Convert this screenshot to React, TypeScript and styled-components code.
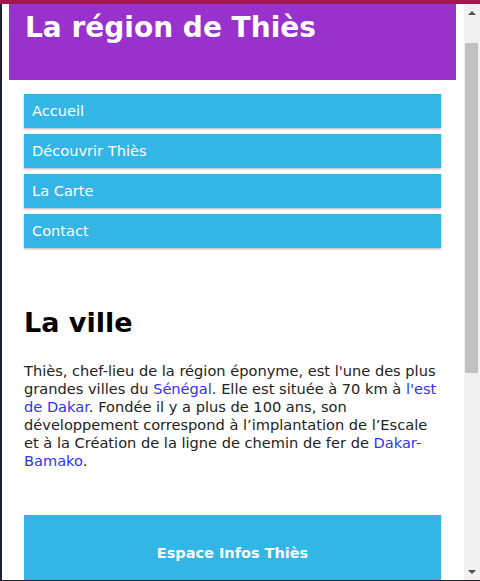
import React from "react";
import styled, { createGlobalStyle } from "styled-components";

const Global = createGlobalStyle`
  html, body { margin: 0; padding: 0; overflow: hidden; background: #fff; }
  body { font-family: "DejaVu Sans", "Liberation Sans", sans-serif; }
`;

const Frame = styled.div`
  width: 480px;
  height: 581px;
  display: flex;
  flex-direction: column;
  overflow: hidden;
`;

const TopBar = styled.div`
  height: 4px;
  flex: 0 0 4px;
  background: #a3164f;
`;

const Middle = styled.div`
  flex: 1;
  display: flex;
  min-height: 0;
`;

const LeftEdge = styled.div`
  width: 2px;
  flex: 0 0 2px;
  background: #1d2030;
`;

const Viewport = styled.div`
  flex: 1;
  min-width: 0;
  overflow: hidden;
  background: #fff;
`;

const ScrollTrack = styled.div`
  box-sizing: border-box;
  width: 16px;
  flex: 0 0 16px;
  background: #f0f0f0;
  display: flex;
  flex-direction: column;
  align-items: center;
  padding: 0 2px 0 1px;
`;

const Arrow = styled.div<{ $down?: boolean }>`
  flex: 0 0 17px;
  height: 17px;
  width: 100%;
  display: flex;
  align-items: center;
  justify-content: center;
  &::after {
    content: "";
    width: 0;
    height: 0;
    border-left: 4px solid transparent;
    border-right: 4px solid transparent;
    ${(p) =>
      p.$down
        ? "border-top: 4px solid #505050;"
        : "border-bottom: 4px solid #505050;"}
  }
`;

const Thumb = styled.div`
  width: 13px;
  height: 330px;
  margin-top: 22px;
  background: #c1c1c1;
`;

const TrackFill = styled.div`
  flex: 1;
`;

const BottomBar = styled.div`
  height: 1px;
  flex: 0 0 1px;
  background: #1d2030;
`;

const Header = styled.header`
  margin: 0 8px 0 7px;
  height: 76px;
  background: #9932cc;
  padding: 6px 0 0 16px;
  box-sizing: border-box;
`;

const Title = styled.h1`
  margin: 0;
  color: #fff;
  font-size: 28px;
  line-height: 36px;
  font-weight: bold;
`;

const Nav = styled.nav`
  margin: 14px 23px 0 22px;
  display: flex;
  flex-direction: column;
  gap: 6px;
`;

const NavItem = styled.a`
  display: block;
  height: 34px;
  line-height: 34px;
  padding-left: 8px;
  background: #33b5e5;
  color: #fff;
  font-size: 14.6px;
  text-decoration: none;
  box-shadow: 0 1px 2px rgba(0, 0, 0, 0.3);
`;

const Main = styled.main`
  margin: 58px 23px 0 22px;
`;

const SectionTitle = styled.h2`
  margin: 0;
  font-size: 27px;
  line-height: 33px;
  font-weight: bold;
  color: #000;
`;

const Paragraph = styled.p`
  margin: 23px 0 0;
  font-size: 14.6px;
  line-height: 18px;
  color: #222;
`;

const Link = styled.a`
  color: #3232f0;
  text-decoration: none;
`;

const InfoBox = styled.section`
  margin-top: 45px;
  background: #33b5e5;
  padding: 28px 0 40px;
  text-align: center;
  color: #fff;
  font-weight: bold;
  font-size: 14.5px;
  line-height: 20px;
`;

export default function App() {
  return (
    <>
      <Global />
      <Frame>
        <TopBar />
        <Middle>
          <LeftEdge />
          <Viewport>
            <Header>
              <Title>La région de Thiès</Title>
            </Header>
            <Nav>
              <NavItem href="#">Accueil</NavItem>
              <NavItem href="#">Découvrir Thiès</NavItem>
              <NavItem href="#">La Carte</NavItem>
              <NavItem href="#">Contact</NavItem>
            </Nav>
            <Main>
              <SectionTitle>La ville</SectionTitle>
              <Paragraph>
                Thiès, chef-lieu de la région éponyme, est l'une des plus grandes villes du{" "}
                <Link href="#">Sénégal</Link>. Elle est située à 70 km à{" "}
                <Link href="#">l'est de Dakar</Link>. Fondée il y a plus de 100 ans, son
                développement correspond à l’implantation de l’Escale et à la Création de la
                ligne de chemin de fer de <Link href="#">Dakar-Bamako</Link>.
              </Paragraph>
              <InfoBox>Espace Infos Thiès</InfoBox>
            </Main>
          </Viewport>
          <ScrollTrack>
            <Arrow />
            <Thumb />
            <TrackFill />
            <Arrow $down />
          </ScrollTrack>
        </Middle>
        <BottomBar />
      </Frame>
    </>
  );
}
